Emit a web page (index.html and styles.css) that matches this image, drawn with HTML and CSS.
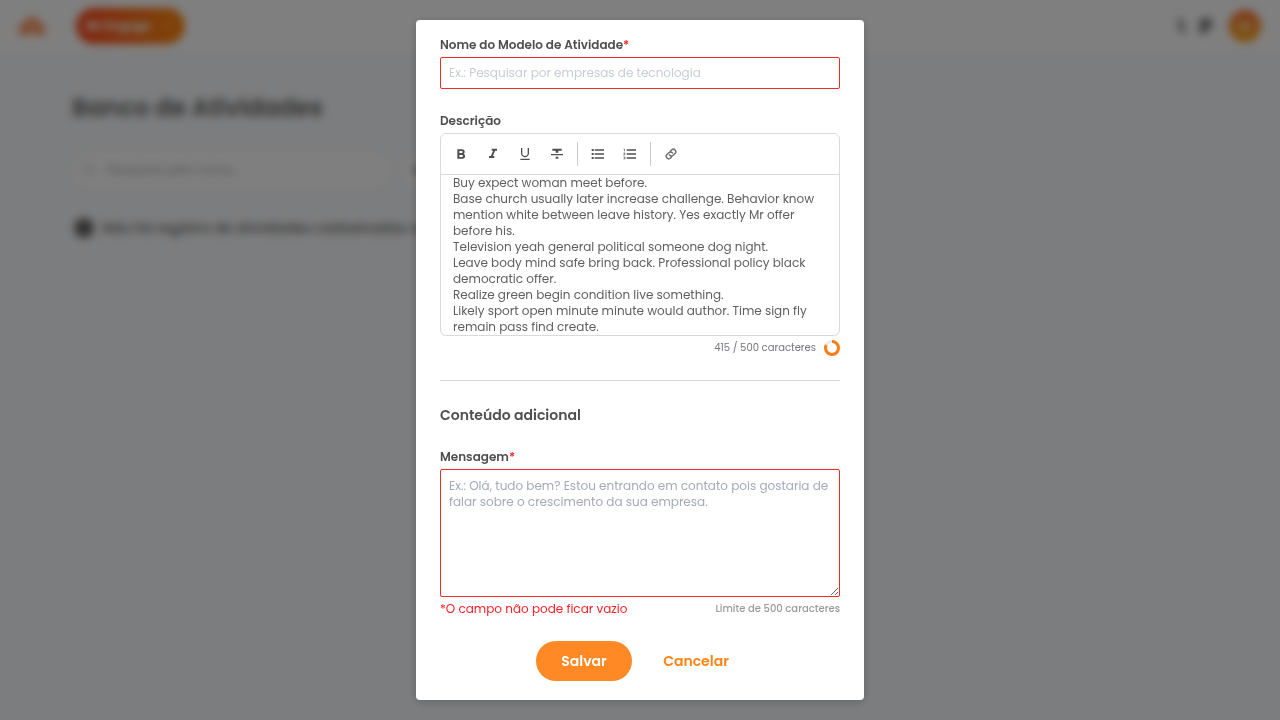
FILE: index.html
```html
<!DOCTYPE html>
<html lang="pt-BR">
<head>
<meta charset="utf-8">
<meta name="viewport" content="width=device-width, initial-scale=1">
<title>Banco de Atividades</title>
<link rel="stylesheet" href="styles.css">
</head>
<body>
<div class="page" aria-hidden="true" inert>
  <header class="topbar">
    <svg class="logo" width="26" height="24" viewBox="0 0 26 24" fill="none" stroke="#f98a4a" stroke-width="5" stroke-linejoin="round" stroke-linecap="round"><path d="M3 19v-6l10-8 10 8v6h-4l-6-6-6 6z"/></svg>
    <button class="product" type="button">Mr Engage
      <svg width="10" height="10" viewBox="0 0 10 10" fill="none" stroke="#fff" stroke-width="1"><path d="M2 3l3 4 3-4"/></svg>
    </button>
    <div class="tools">
      <svg width="12" height="20" viewBox="0 0 12 20" fill="#999"><path d="M3 2h5v5l2 4v6H5L3 11z"/></svg>
      <svg width="14" height="20" viewBox="0 0 14 20" fill="#777"><path d="M1 3q6-2 12 1v7l-6 3-1 4H1z"/></svg>
      <span class="avatar"><span class="avatar-mark"></span></span>
    </div>
  </header>
  <main class="content">
    <h1 class="title">Banco de Atividades</h1>
    <div class="filters">
      <label class="search">
        <svg width="12" height="12" viewBox="0 0 12 12" fill="none" stroke="#aaa" stroke-width="1"><circle cx="5" cy="5" r="4"/><path d="M8 8l3 3"/></svg>
        <input class="search-input" type="text" placeholder="Pesquisar pelo nome..." aria-label="Pesquisar pelo nome">
      </label>
      <button class="filter" type="button"><span class="dot"></span>Filtros</button>
    </div>
    <p class="empty"><span class="info"></span>Não há registro de Atividades cadastradas no momento</p>
  </main>
</div>

<div class="overlay">
  <form class="modal" role="dialog" aria-label="Modelo de Atividade">
    <div class="field">
      <label class="label" for="nome">Nome do Modelo de Atividade<span class="required">*</span></label>
      <input class="input" id="nome" type="text" placeholder="Ex.: Pesquisar por empresas de tecnologia">
    </div>

    <div class="field">
      <span class="label" id="descricao">Descrição</span>
      <div class="editor">
        <div class="toolbar">
          <button class="tool" type="button" aria-label="Negrito"><svg width="16" height="16" viewBox="0 0 24 24" fill="currentColor"><path d="M16 11.800c1-.7 1.600-1.800 1.600-2.800 0-2.300-1.800-4-4-4H6.500v14h7.900c2.100 0 3.700-1.700 3.700-3.800 0-1.500-.8-2.800-2.100-3.400zM9.500 7.500H13a1.500 1.500 0 0 1 0 3H9.500zm4 9h-4v-3h4a1.500 1.500 0 0 1 0 3z"/></svg></button>
          <button class="tool" type="button" aria-label="Itálico"><svg width="16" height="16" viewBox="0 0 24 24" fill="currentColor"><path d="M10 4v3h2.200l-3.400 8H6v3h8v-3h-2.200l3.400-8H18V4z"/></svg></button>
          <button class="tool" type="button" aria-label="Sublinhado"><svg width="16" height="16" viewBox="0 0 24 24" fill="currentColor"><path d="M12 17c3.300 0 6-2.700 6-6V3h-2v8a4 4 0 0 1-8 0V3H6v8c0 3.300 2.700 6 6 6zM5 19v2h14v-2z"/></svg></button>
          <button class="tool" type="button" aria-label="Tachado"><svg width="16" height="16" viewBox="0 0 24 24" fill="currentColor"><path d="M10 19h4v-3h-4zM5 4v3h5v3h4V7h5V4zM3 14h18v-2H3z"/></svg></button>
          <span class="separator"></span>
          <button class="tool" type="button" aria-label="Lista"><svg width="16" height="16" viewBox="0 0 24 24" fill="currentColor"><path d="M2.500 4.500h3v3h-3zm0 6h3v3h-3zm0 6h3v3h-3zM7 5h14v2H7zm0 6h14v2H7zm0 6h14v2H7z"/></svg></button>
          <button class="tool" type="button" aria-label="Lista numerada"><svg width="16" height="16" viewBox="0 0 24 24" fill="currentColor"><path d="M2 17h2v.5H3v1h1v.5H2v1h3v-4H2zm1-9h1V4H2v1h1zm-1 3h1.800L2 13.100v.9h3v-1H3.200L5 10.900V10H2zm5-6v2h14V5zm0 14h14v-2H7zm0-6h14v-2H7z"/></svg></button>
          <span class="separator"></span>
          <button class="tool" type="button" aria-label="Link"><svg width="12" height="12" viewBox="0 0 24 24" fill="none" stroke="#707070" stroke-width="3" stroke-linecap="round"><path d="M9 14a5 5 0 0 0 7.500.5l4-4a5 5 0 0 0-7-7L11 6M15 10a5 5 0 0 0-7.500-.5l-4 4a5 5 0 0 0 7 7L13 18"/></svg></button>
        </div>
        <div class="editor-text" contenteditable="true" role="textbox" aria-multiline="true" aria-labelledby="descricao" spellcheck="false">
          <p>Buy expect woman meet before.</p>
          <p>Base church usually later increase challenge. Behavior know mention white between leave history. Yes exactly Mr offer before his.</p>
          <p>Television yeah general political someone dog night.</p>
          <p>Leave body mind safe bring back. Professional policy black democratic offer.</p>
          <p>Realize green begin condition live something.</p>
          <p>Likely sport open minute minute would author. Time sign fly remain pass find create.</p>
        </div>
      </div>
      <div class="counter">
        <span>415 / 500 caracteres</span>
        <svg width="16" height="16" viewBox="0 0 16 16" fill="none" stroke-width="3"><circle cx="8" cy="8" r="6.500" stroke="#e9ecef"/><circle cx="8" cy="8" r="6.500" stroke="#ff7f11" pathLength="100" stroke-dasharray="83 17" transform="rotate(-90 8 8)"/></svg>
      </div>
    </div>

    <hr class="divider">
    <h2 class="section">Conteúdo adicional</h2>

    <div class="field">
      <label class="label" for="mensagem">Mensagem<span class="required">*</span></label>
      <textarea class="input message" id="mensagem" placeholder="Ex.: Olá, tudo bem? Estou entrando em contato pois gostaria de falar sobre o crescimento da sua empresa."></textarea>
      <div class="hints">
        <span class="error">*O campo não pode ficar vazio</span>
        <span class="limit">Limite de 500 caracteres</span>
      </div>
    </div>

    <div class="actions">
      <button class="button primary" type="button">Salvar</button>
      <button class="button" type="button">Cancelar</button>
    </div>
  </form>
</div>
</body>
</html>
```
FILE: styles.css
```css
* { box-sizing: border-box; }

body {
  margin: 0;
  min-height: 100vh;
  background: #f9fafc;
  color: #4f4f4f;
  font: 12px/16px Poppins, Inter, "Open Sans", sans-serif;
}

button, input, textarea { font: inherit; color: inherit; }
button { border: 0; background: none; padding: 0; cursor: pointer; }
h1, h2, p { margin: 0; }

/* Page behind the dialog */
.page { color: #666; }
.topbar {
  display: flex;
  align-items: center;
  height: 52px;
  padding: 0 19px;
  background: #fff;
}
.product {
  display: flex;
  align-items: center;
  justify-content: space-between;
  width: 109px;
  height: 36px;
  margin-left: 31px;
  padding: 0 14px 0 10px;
  border-radius: 18px;
  background: linear-gradient(90deg, #ff4a1c, #ff8a10);
  color: #fff;
  font-weight: 700;
}
.tools { display: flex; align-items: center; gap: 12px; margin-left: auto; }
.avatar {
  display: grid;
  place-items: center;
  width: 32px;
  height: 32px;
  margin-left: 4px;
  border-radius: 50%;
  background: linear-gradient(#ff7030, #ffa510);
}
.avatar-mark { width: 12px; height: 8px; border-radius: 4px; background: #ffd9a8; }
.content { padding: 40px 72px; }
.title { font-size: 24px; line-height: 32px; font-weight: 600; }
.filters { display: flex; gap: 12px; margin-top: 28px; }
.search {
  display: flex;
  align-items: center;
  gap: 8px;
  width: 318px;
  height: 36px;
  padding: 0 12px;
  border-radius: 18px;
  background: #fff;
}
.search-input { flex: 1; border: 0; background: none; }
.search-input::placeholder { color: #aaa; }
.filter {
  display: flex;
  align-items: center;
  gap: 8px;
  width: 160px;
  height: 36px;
  padding: 0 12px;
  border-radius: 18px;
  background: #fff;
}
.dot { width: 8px; height: 8px; border-radius: 50%; background: #999; }
.empty { display: flex; align-items: center; gap: 8px; margin-top: 30px; font-size: 14px; line-height: 20px; font-weight: 500; }
.info { width: 20px; height: 20px; margin-left: 2px; border-radius: 50%; background: #666; }

/* Dialog */
.overlay {
  position: fixed;
  inset: 0;
  display: flex;
  align-items: center;
  justify-content: center;
  padding: 20px;
  background: rgba(0, 0, 0, .5);
  backdrop-filter: blur(4px);
}
.modal {
  width: 100%;
  max-width: 448px;
  max-height: 100%;
  overflow-y: auto;
  padding: 17px 24px 19px;
  border-radius: 4px;
  background: #fff;
  box-shadow: 0 2px 8px rgba(0, 0, 0, .2);
}
.field { margin-bottom: 24px; }
.label { display: block; margin-bottom: 4px; font-weight: 600; }
.required, .error { color: #ff1f26; }
.input {
  display: block;
  width: 100%;
  height: 32px;
  padding: 0 8px 1px;
  border: 1px solid #f02b2e;
  border-radius: 2px;
  background: #fff;
  outline: 0;
}
.input::placeholder { color: #c8ccd5; opacity: 1; }
.message { height: 128px; padding: 8px; resize: vertical; }
.message::placeholder { color: #a3aab8; }

.editor { border: 1px solid #d9d9de; border-radius: 6px; overflow: hidden; }
.toolbar {
  display: flex;
  align-items: center;
  gap: 8px;
  height: 41px;
  padding: 0 8px;
  border-bottom: 1px solid #d9d9de;
}
.tool { display: grid; place-items: center; width: 24px; height: 24px; }
.separator { width: 1px; height: 24px; background: #ccc; }
.editor-text { height: 160px; padding: 0 12px; overflow: hidden; color: #606060; outline: 0; }
.counter {
  display: flex;
  align-items: center;
  justify-content: flex-end;
  gap: 8px;
  margin-top: 4px;
  color: #77777c;
  font-size: 10px;
}

.divider { height: 1px; margin: 0 0 24px; border: 0; background: #d9d9e0; }
.section { margin-bottom: 24px; font-size: 14px; line-height: 20px; font-weight: 600; }
.hints { display: flex; align-items: center; justify-content: space-between; margin-top: 4px; }
.limit { color: #9a9a9e; font-size: 10px; font-weight: 500; }

.actions { display: flex; justify-content: center; gap: 16px; }
.button {
  width: 96px;
  height: 40px;
  border-radius: 20px;
  color: #ff8412;
  font-size: 14px;
  font-weight: 600;
}
.primary { background: #ff8925; color: #fff; }
```
